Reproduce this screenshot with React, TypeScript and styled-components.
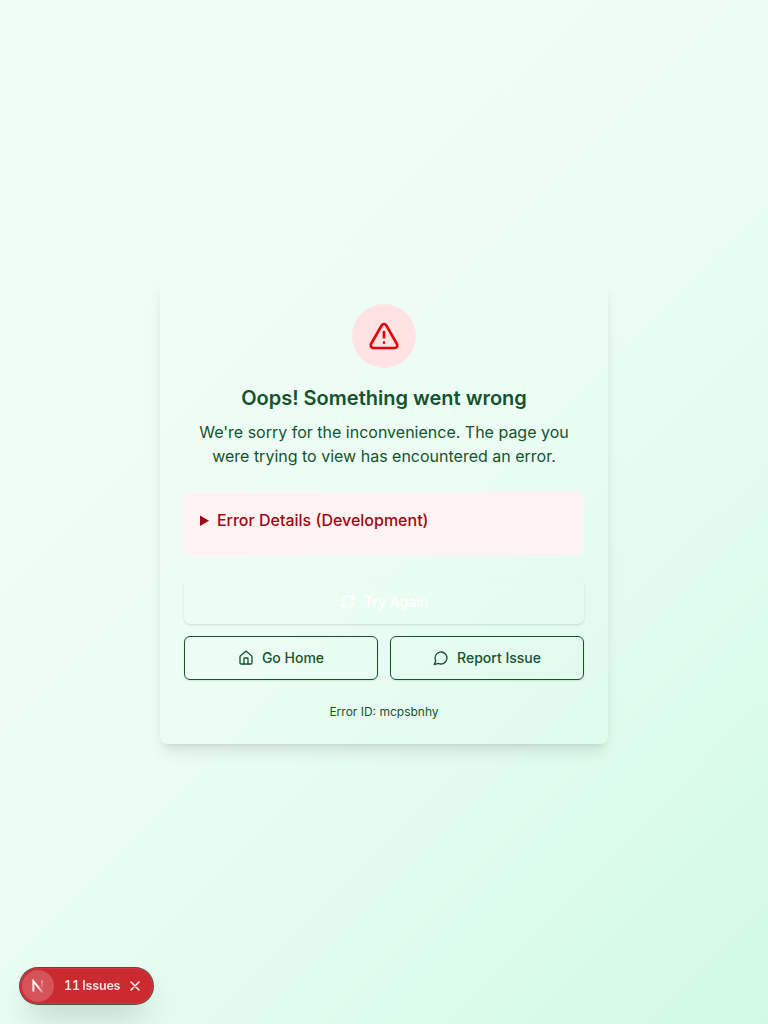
import React from "react";
import styled, { createGlobalStyle } from "styled-components";
import { TriangleAlert, RefreshCw, House } from "lucide-react";

const GlobalStyle = createGlobalStyle`
  *, *::before, *::after { box-sizing: border-box; }
  body {
    margin: 0;
    font-family: Inter, "Liberation Sans", sans-serif;
    line-height: 1.5;
    color: #14532d;
  }
  h1, p { margin: 0; }
`;

const Page = styled.main`
  min-height: 100vh;
  display: flex;
  align-items: center;
  justify-content: center;
  padding: 16px;
  background: linear-gradient(135deg, #f0fdf4 0%, #ecfdf5 50%, #d1fae5 100%);
`;

const Card = styled.section`
  width: 100%;
  max-width: 448px;
  padding: 24px;
  border-radius: 8px;
  box-shadow: 0 10px 15px -3px rgba(0, 0, 0, 0.1), 0 4px 6px -4px rgba(0, 0, 0, 0.1);
  display: flex;
  flex-direction: column;
  gap: 24px;
`;

const Header = styled.header`
  display: flex;
  flex-direction: column;
  align-items: center;
  text-align: center;
`;

const AlertCircle = styled.div`
  width: 64px;
  height: 64px;
  margin-bottom: 16px;
  border-radius: 50%;
  display: flex;
  align-items: center;
  justify-content: center;
  background: #ffe2e2;
  color: #e7000b;
`;

const Title = styled.h1`
  font-size: 20px;
  line-height: 28px;
  font-weight: 600;
`;

const Description = styled.p`
  margin-top: 8px;
  font-size: 16px;
  line-height: 24px;
`;

const ErrorDetails = styled.details`
  padding: 16px 16px 24px;
  border-radius: 8px;
  background: #fef2f2;
  color: #9f0712;
`;

const Summary = styled.summary`
  font-size: 16px;
  line-height: 24px;
  font-weight: 500;
  cursor: pointer;
`;

const Actions = styled.div`
  display: flex;
  flex-direction: column;
  gap: 12px;
`;

const ActionRow = styled.div`
  display: grid;
  grid-template-columns: 1fr 1fr;
  gap: 12px;
`;

const Button = styled.button<{ $outline?: boolean }>`
  height: 44px;
  padding: 0 16px;
  display: flex;
  align-items: center;
  justify-content: center;
  gap: 8px;
  font: 500 14px/20px Inter, "Liberation Sans", sans-serif;
  border-radius: 6px;
  cursor: pointer;
  background: transparent;
  border: ${(p) => (p.$outline ? "1px solid #14532d" : "0")};
  color: ${(p) => (p.$outline ? "#14532d" : "#ffffff")};
  box-shadow: ${(p) =>
    p.$outline
      ? "0 1px 2px 0 rgba(0, 0, 0, 0.1)"
      : "0 1px 3px 0 rgba(0, 0, 0, 0.1), 0 1px 2px -1px rgba(0, 0, 0, 0.1)"};
`;

const ErrorId = styled.p`
  text-align: center;
  font-size: 12px;
  line-height: 16px;
`;

const IssuesBadge = styled.div`
  position: fixed;
  left: 20px;
  bottom: 20px;
  width: 133px;
  height: 36px;
  padding: 2px;
  display: flex;
  align-items: center;
  border-radius: 18px;
  background: #ca2a30;
  color: #ffffff;
  box-shadow: 0 0 0 1px #4c4f4d, inset 0 0 0 1px #d9363c, 0 16px 32px -8px rgba(0, 0, 0, 0.24);
`;

const LogoDisc = styled.div`
  width: 32px;
  height: 32px;
  border-radius: 50%;
  display: flex;
  align-items: center;
  justify-content: center;
  background: rgba(255, 255, 255, 0.2);
`;

const IssuesLabel = styled.span`
  margin-left: 10px;
  width: 57px;
  white-space: nowrap;
  font-size: 12.5px;
  line-height: 16px;
  font-weight: 600;
  letter-spacing: -0.2px;
  word-spacing: -0.6px;
  font-variant-numeric: tabular-nums;
  color: rgba(255, 255, 255, 0.88);
`;

const CloseIcon = styled.svg`
  margin-left: 8px;
`;

export default function App() {
  return (
    <>
      <GlobalStyle />
      <Page>
        <Card>
          <Header>
            <AlertCircle>
              <TriangleAlert size={32} />
            </AlertCircle>
            <Title>Oops! Something went wrong</Title>
            <Description>
              We're sorry for the inconvenience. The page you were trying to view has encountered an error.
            </Description>
          </Header>
          <ErrorDetails>
            <Summary>Error Details (Development)</Summary>
          </ErrorDetails>
          <Actions>
            <Button>
              <RefreshCw size={16} />
              Try Again
            </Button>
            <ActionRow>
              <Button $outline>
                <House size={16} />
                Go Home
              </Button>
              <Button $outline>
                <svg
                  width="16"
                  height="16"
                  viewBox="0 0 24 24"
                  fill="none"
                  stroke="currentColor"
                  strokeWidth="2"
                  strokeLinecap="round"
                  strokeLinejoin="round"
                >
                  <path d="M7.9 20A9 9 0 1 0 4 16.1L2 22Z" />
                </svg>
                Report Issue
              </Button>
            </ActionRow>
          </Actions>
          <ErrorId>Error ID: mcpsbnhy</ErrorId>
        </Card>
      </Page>
      <IssuesBadge>
        <LogoDisc>
          <svg width="14" height="14" viewBox="0 0 14 14" fill="none">
            <defs>
              <linearGradient id="diagonal" x1="7" y1="8" x2="13" y2="15" gradientUnits="userSpaceOnUse">
                <stop stopColor="#fff" />
                <stop offset="0.7" stopColor="#fff" stopOpacity="0.3" />
                <stop offset="1" stopColor="#fff" stopOpacity="0" />
              </linearGradient>
              <linearGradient id="stem" x1="11" y1="1" x2="11" y2="10" gradientUnits="userSpaceOnUse">
                <stop stopColor="#fff" stopOpacity="0.7" />
                <stop offset="1" stopColor="#fff" stopOpacity="0" />
              </linearGradient>
            </defs>
            <path d="M2.4 12.5V2.2L11.6 13.6" stroke="url(#diagonal)" strokeWidth="1.9" />
            <path d="M10.9 1.5V9.5" stroke="url(#stem)" strokeWidth="1.4" />
          </svg>
        </LogoDisc>
        <IssuesLabel>11 Issues</IssuesLabel>
        <CloseIcon width="12" height="12" viewBox="0 0 12 12" fill="none">
          <path d="M2 2L10 10M10 2L2 10" stroke="#fff" strokeWidth="1.4" strokeLinecap="round" />
        </CloseIcon>
      </IssuesBadge>
    </>
  );
}
